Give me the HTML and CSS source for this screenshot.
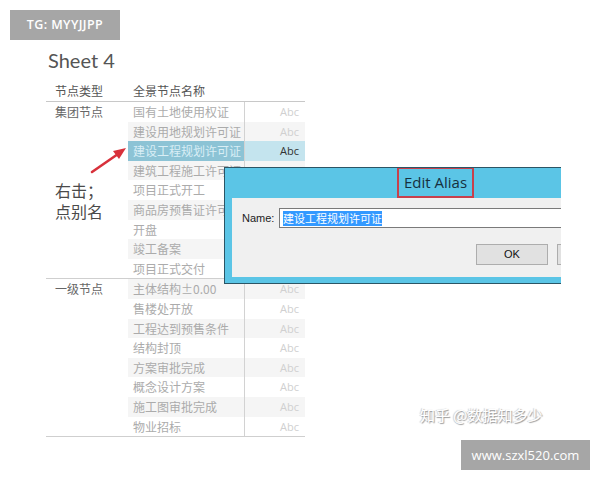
FILE: index.html
```html
<!DOCTYPE html>
<html lang="zh-CN">
<head>
<meta charset="utf-8">
<title>Sheet 4</title>
<link rel="stylesheet" href="styles.css">
</head>
<body>
<div class="page">
  <div class="sheet-title">Sheet 4</div>
  <div class="table">
    <div class="head">
      <div class="c1">节点类型</div>
      <div class="c2">全景节点名称</div>
    </div>
    <div class="group">
      <div class="c1 type">集团节点</div>
      <div class="rows">
        <div class="row"><div class="name">国有土地使用权证</div><div class="abc">Abc</div></div>
        <div class="row alt"><div class="name">建设用地规划许可证</div><div class="abc">Abc</div></div>
        <div class="row sel"><div class="name">建设工程规划许可证</div><div class="abc">Abc</div></div>
        <div class="row alt"><div class="name">建筑工程施工许可证</div><div class="abc">Abc</div></div>
        <div class="row"><div class="name">项目正式开工</div><div class="abc">Abc</div></div>
        <div class="row alt"><div class="name">商品房预售证许可证</div><div class="abc">Abc</div></div>
        <div class="row"><div class="name">开盘</div><div class="abc">Abc</div></div>
        <div class="row alt"><div class="name">竣工备案</div><div class="abc">Abc</div></div>
        <div class="row"><div class="name">项目正式交付</div><div class="abc">Abc</div></div>
      </div>
    </div>
    <div class="group">
      <div class="c1 type">一级节点</div>
      <div class="rows">
        <div class="row alt"><div class="name">主体结构±0.00</div><div class="abc">Abc</div></div>
        <div class="row"><div class="name">售楼处开放</div><div class="abc">Abc</div></div>
        <div class="row alt"><div class="name">工程达到预售条件</div><div class="abc">Abc</div></div>
        <div class="row"><div class="name">结构封顶</div><div class="abc">Abc</div></div>
        <div class="row alt"><div class="name">方案审批完成</div><div class="abc">Abc</div></div>
        <div class="row"><div class="name">概念设计方案</div><div class="abc">Abc</div></div>
        <div class="row alt"><div class="name">施工图审批完成</div><div class="abc">Abc</div></div>
        <div class="row"><div class="name">物业招标</div><div class="abc">Abc</div></div>
      </div>
    </div>
  </div>
</div>

<div class="wm-top">TG: MYYJJPP</div>

<div class="note">右击；<br>点别名</div>
<svg class="arrow" width="44" height="32" viewBox="0 0 44 32">
  <path d="M4 27 L30 9" stroke="#d8313b" stroke-width="2.6" stroke-linecap="round" fill="none"/>
  <path d="M38 3 L25 6 L31 14 Z" fill="#d8313b"/>
</svg>

<div class="dialog">
  <div class="titlebar"><span class="title">Edit Alias</span></div>
  <div class="panel">
    <div class="name-row">
      <span class="label">Name:</span>
      <div class="input"><span class="selected">建设工程规划许可证</span></div>
    </div>
    <div class="buttons">
      <div class="btn">OK</div>
      <div class="btn">Cancel</div>
    </div>
  </div>
</div>

<div class="wm-zhihu">知乎 @数据知多少</div>
<div class="wm-bottom">www.szxl520.com</div>
</body>
</html>
```
FILE: styles.css
```css
html, body {
  margin: 0;
  padding: 0;
  background: #ffffff;
}
body {
  width: 600px;
  height: 480px;
  position: relative;
  overflow: hidden;
  font-family: "Noto Sans CJK SC", "Noto Sans", sans-serif;
}
.page {
  padding: 48px 0 0 46px;
}
.sheet-title {
  font-family: "Lato", "Open Sans", sans-serif;
  font-size: 20px;
  line-height: 24px;
  color: #555555;
  margin-left: 2px;
}
.table {
  width: 259px;
  margin-top: 9px;
  font-size: 12px;
}
.head {
  display: flex;
  height: 20px;
  line-height: 20px;
  border-bottom: 1px solid #c8c8c8;
  color: #555555;
}
.c1 {
  width: 82px;
  padding-left: 9px;
  box-sizing: border-box;
  flex: none;
}
.c2 {
  padding-left: 5px;
}
.group {
  display: flex;
  border-bottom: 1px solid #cfcfcf;
}
.type {
  line-height: 19.6px;
  color: #666666;
}
.rows {
  display: flex;
  flex-direction: column;
  width: 177px;
}
.row {
  display: flex;
  height: 19.6px;
  line-height: 19.6px;
}
.row.alt {
  background: #f5f5f5;
}
.name {
  width: 116px;
  padding-left: 5px;
  box-sizing: border-box;
  color: #ababab;
  white-space: nowrap;
  overflow: hidden;
}
.abc {
  width: 61px;
  border-left: 1px solid #d2d2d2;
  box-sizing: border-box;
  text-align: right;
  padding-right: 6px;
  font-family: "Open Sans", "Noto Sans", sans-serif;
  font-size: 11px;
  color: #d0d0d0;
}
.row.sel .name {
  background: #8cc3d5;
  color: #d9eef5;
}
.row.sel .abc {
  background: #c4e4ee;
  color: #333333;
}

.wm-top {
  position: absolute;
  left: 10px;
  top: 10px;
  width: 110px;
  height: 30px;
  background: #a6a6a6;
  color: #ffffff;
  font-family: "Open Sans", sans-serif;
  font-weight: 600;
  font-size: 12.5px;
  letter-spacing: 0.4px;
  line-height: 30px;
  text-align: center;
}

.note {
  position: absolute;
  left: 55px;
  top: 180px;
  font-size: 16px;
  line-height: 21px;
  color: #4a4a4a;
}
.arrow {
  position: absolute;
  left: 88px;
  top: 145px;
}

.dialog {
  position: absolute;
  left: 224px;
  top: 167px;
  width: 337px;
  height: 117px;
  box-sizing: border-box;
  border: 1px solid #2b5565;
  border-right: none;
  background: #5bc5e6;
  overflow: hidden;
}
.titlebar {
  height: 30px;
  display: flex;
  padding-left: 172px;
}
.title {
  flex: none;
  height: 31px;
  margin-top: -1px;
  box-sizing: border-box;
  border: 2px solid #c8404c;
  padding: 0 5px;
  font-family: "Open Sans", "Noto Sans", sans-serif;
  font-size: 15px;
  line-height: 27px;
  color: #16303f;
}
.panel {
  margin-left: 7px;
  width: 420px;
  height: 79px;
  background: #f0f0f0;
  padding-top: 10px;
  box-sizing: border-box;
}
.name-row {
  display: flex;
  align-items: center;
  padding-left: 10px;
  height: 20px;
}
.label {
  font-family: "Liberation Sans", "Noto Sans", sans-serif;
  font-size: 11px;
  color: #222222;
  width: 37px;
  flex: none;
}
.input {
  flex: 1;
  height: 20px;
  box-sizing: border-box;
  border: 1px solid #7a7a7a;
  background: #ffffff;
  display: flex;
  align-items: center;
  padding-left: 3px;
}
.selected {
  background: #3399ff;
  color: #ffffff;
  font-size: 11px;
  line-height: 15px;
}
.buttons {
  display: flex;
  gap: 9px;
  padding-left: 244px;
  margin-top: 16px;
}
.btn {
  width: 72px;
  height: 21px;
  flex: none;
  box-sizing: border-box;
  border: 1px solid #adadad;
  background: #e1e1e1;
  font-family: "Liberation Sans", "Noto Sans", sans-serif;
  font-size: 11px;
  line-height: 19px;
  text-align: center;
  color: #111111;
}

.wm-zhihu {
  position: absolute;
  left: 420px;
  top: 405px;
  font-size: 15px;
  line-height: 20px;
  color: #ffffff;
  text-shadow: 1px 1px 1px #9a9a9a, -1px 0 1px #c8c8c8;
}
.wm-bottom {
  position: absolute;
  left: 461px;
  top: 440px;
  width: 129px;
  height: 30px;
  background: #a6a6a6;
  color: #ffffff;
  font-family: "Open Sans", sans-serif;
  font-size: 13px;
  line-height: 30px;
  text-align: center;
}
```
